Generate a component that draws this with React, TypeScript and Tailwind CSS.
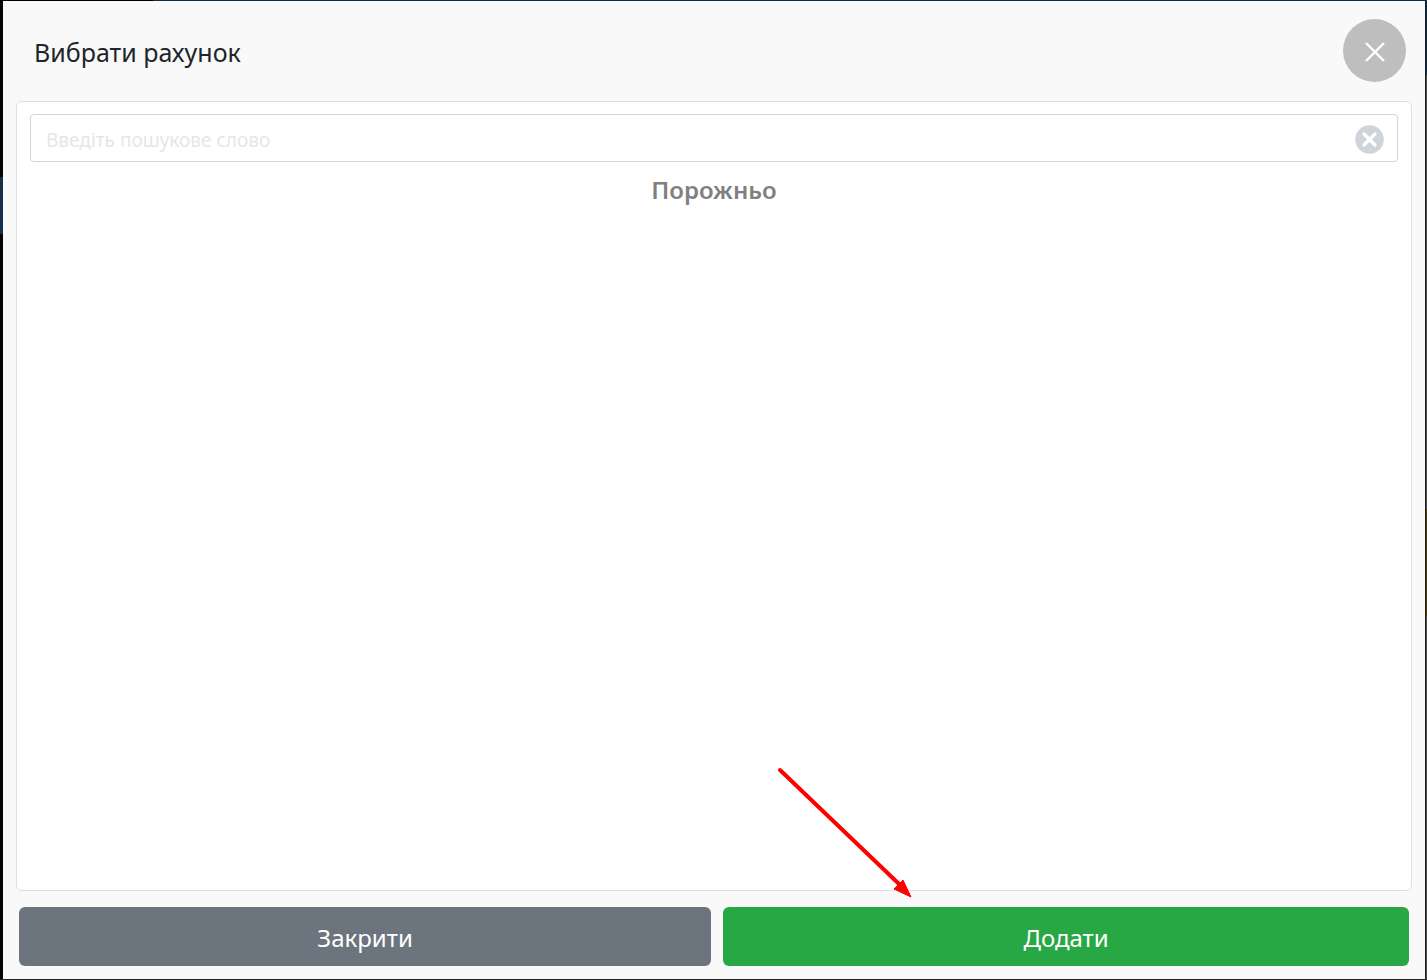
import { useState } from "react";

function Backdrop({ children }: { children: React.ReactNode }) {
  return (
    <div className="flex min-h-screen flex-col bg-black font-['Noto_Sans','Open_Sans',sans-serif]">
      <div className="flex h-px">
        <div className="w-[153px] bg-black"></div>
        <div className="flex-1 bg-[#0f2d42]"></div>
      </div>
      <div className="flex flex-1">
        {/* Dimmed page on the left */}
        <div className="flex w-[3px] flex-col bg-[#050507]">
          <div className="h-44"></div>
          <div className="h-[57px] bg-[#12304a]"></div>
        </div>
        {children}
        {/* Dimmed page on the right */}
        <div className="flex w-[2px] flex-col border-l border-[#1c1c1c] bg-[#4a4a4a]">
          <div className="h-[74px] bg-[#0f2d42]"></div>
          <div className="h-[434px]"></div>
          <div className="h-[107px] bg-[#463c0a]"></div>
        </div>
      </div>
      <div className="h-px bg-[#212121]"></div>
    </div>
  );
}

function PointerArrow() {
  return (
    <svg
      className="pointer-events-none absolute bottom-full left-[53px] mb-2"
      width="138"
      height="132"
      viewBox="0 0 138 132"
      aria-hidden="true"
    >
      <line x1="4" y1="3" x2="123" y2="117" stroke="#ff0000" strokeWidth="4" strokeLinecap="round" />
      <path d="M135 130 L118 122 L127 113 Z" fill="#ff0000" stroke="#ff0000" strokeWidth="1" />
    </svg>
  );
}

export default function App() {
  const [query, setQuery] = useState("");

  return (
    <Backdrop>
      <div
        role="dialog"
        aria-labelledby="dialog-title"
        className="flex flex-1 flex-col bg-[#f9f9f9]"
      >
        <header className="flex items-center justify-between pt-[18px] pr-[19px] pb-[19px] pl-[31px]">
          <h1 id="dialog-title" className="pt-0.5 text-[25px] leading-8 text-[#212529]">
            Вибрати рахунок
          </h1>
          <button
            type="button"
            aria-label="Закрити вікно"
            className="flex size-[63px] items-center justify-center rounded-full bg-[#bebebe] text-white"
          >
            <svg width="20" height="20" viewBox="0 0 20 20" className="mt-[3px]" aria-hidden="true">
              <path d="M1 1 L19 19 M19 1 L1 19" stroke="currentColor" strokeWidth="2.4" />
            </svg>
          </button>
        </header>

        <main className="mx-[13px] flex-1 rounded-md border border-[#dfdfdf] bg-white px-[13px] py-3">
          <div className="flex h-12 items-center rounded border border-[#ced4da] pr-[13px] pl-[15px]">
            <input
              type="text"
              aria-label="Введіть пошукове слово"
              placeholder="Введіть пошукове слово"
              value={query}
              onChange={(e) => setQuery(e.target.value)}
              className="min-w-0 flex-1 pt-1 text-[19px] leading-7 text-[#495057] outline-none placeholder:text-[#e6e6e6]"
            />
            <button type="button" aria-label="Очистити" onClick={() => setQuery("")}>
              <svg width="29" height="29" viewBox="0 0 29 29" className="mt-[3px]" aria-hidden="true">
                <circle cx="14.5" cy="14.5" r="14.3" fill="#ced4da" />
                <path
                  d="M9 9 L20 20 M20 9 L9 20"
                  stroke="white"
                  strokeWidth="3.2"
                  strokeLinecap="round"
                />
              </svg>
            </button>
          </div>
          <p className="mt-3 text-center text-2xl font-semibold text-[#808080]">Порожньо</p>
        </main>

        <footer className="flex gap-3 px-4 pt-4 pb-[13px]">
          <button
            type="button"
            className="h-[59px] flex-auto rounded-md bg-[#6c757d] pt-0.5 text-2xl text-white"
          >
            Закрити
          </button>
          <div className="relative flex flex-auto">
            <button
              type="button"
              className="h-[59px] flex-1 rounded-md bg-[#28a745] px-0.5 pt-0.5 text-2xl text-white"
            >
              Додати
            </button>
            <PointerArrow />
          </div>
        </footer>
      </div>
    </Backdrop>
  );
}
